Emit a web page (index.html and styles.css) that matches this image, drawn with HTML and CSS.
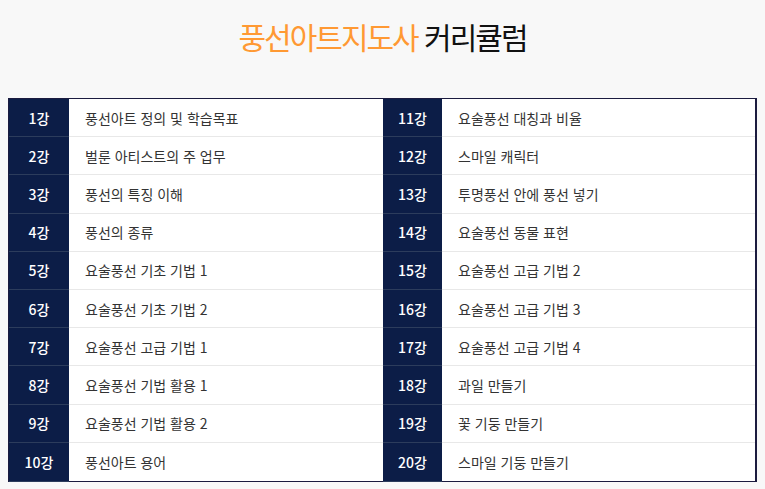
FILE: index.html
```html
<!DOCTYPE html>
<html lang="ko">
<head>
<meta charset="utf-8">
<link rel="stylesheet" href="styles.css">
</head>
<body>
<h1 class="title"><span class="accent">풍선아트지도사</span> 커리큘럼</h1>
<div class="curriculum">
  <div class="row"><div class="num">1강</div><div class="txt">풍선아트 정의 및 학습목표</div><div class="num">11강</div><div class="txt">요술풍선 대칭과 비율</div></div>
  <div class="row"><div class="num">2강</div><div class="txt">벌룬 아티스트의 주 업무</div><div class="num">12강</div><div class="txt">스마일 캐릭터</div></div>
  <div class="row"><div class="num">3강</div><div class="txt">풍선의 특징 이해</div><div class="num">13강</div><div class="txt">투명풍선 안에 풍선 넣기</div></div>
  <div class="row"><div class="num">4강</div><div class="txt">풍선의 종류</div><div class="num">14강</div><div class="txt">요술풍선 동물 표현</div></div>
  <div class="row"><div class="num">5강</div><div class="txt">요술풍선 기초 기법 1</div><div class="num">15강</div><div class="txt">요술풍선 고급 기법 2</div></div>
  <div class="row"><div class="num">6강</div><div class="txt">요술풍선 기초 기법 2</div><div class="num">16강</div><div class="txt">요술풍선 고급 기법 3</div></div>
  <div class="row"><div class="num">7강</div><div class="txt">요술풍선 고급 기법 1</div><div class="num">17강</div><div class="txt">요술풍선 고급 기법 4</div></div>
  <div class="row"><div class="num">8강</div><div class="txt">요술풍선 기법 활용 1</div><div class="num">18강</div><div class="txt">과일 만들기</div></div>
  <div class="row"><div class="num">9강</div><div class="txt">요술풍선 기법 활용 2</div><div class="num">19강</div><div class="txt">꽃 기둥 만들기</div></div>
  <div class="row last"><div class="num">10강</div><div class="txt">풍선아트 용어</div><div class="num">20강</div><div class="txt">스마일 기둥 만들기</div></div>
</div>
</body>
</html>
```
FILE: styles.css
```css
html, body {
  margin: 0;
  padding: 0;
  background: #f8f8f8;
  font-family: "Noto Sans CJK KR", "Noto Sans", sans-serif;
}
.title {
  margin: 0;
  height: 98px;
  box-sizing: border-box;
  padding-top: 16px;
  text-align: center;
  font-size: 30px;
  font-weight: 400;
  letter-spacing: -2px;
  line-height: 40px;
  color: #111;
}
.accent {
  color: #ff9933;
}
.curriculum {
  margin-left: 8px;
  width: 749px;
  box-sizing: border-box;
  border: 1px solid #1b1b3f;
  border-right-width: 2px;
  background: #fff;
}
.row {
  display: grid;
  grid-template-columns: 60px 314px 59px 1fr;
  height: 37.2px;
  border-bottom: 1px solid #e8e8e8;
}
.row.last {
  border-bottom: none;
  height: 38.2px;
}
.num {
  background: #0c1d47;
  color: #fff;
  font-size: 14px;
  font-weight: 500;
  display: flex;
  align-items: center;
  justify-content: center;
  box-shadow: 0 1px 0 #2c3c5c;
}
.txt {
  color: #333;
  font-size: 14px;
  display: flex;
  align-items: center;
  padding-left: 16px;
}
```
